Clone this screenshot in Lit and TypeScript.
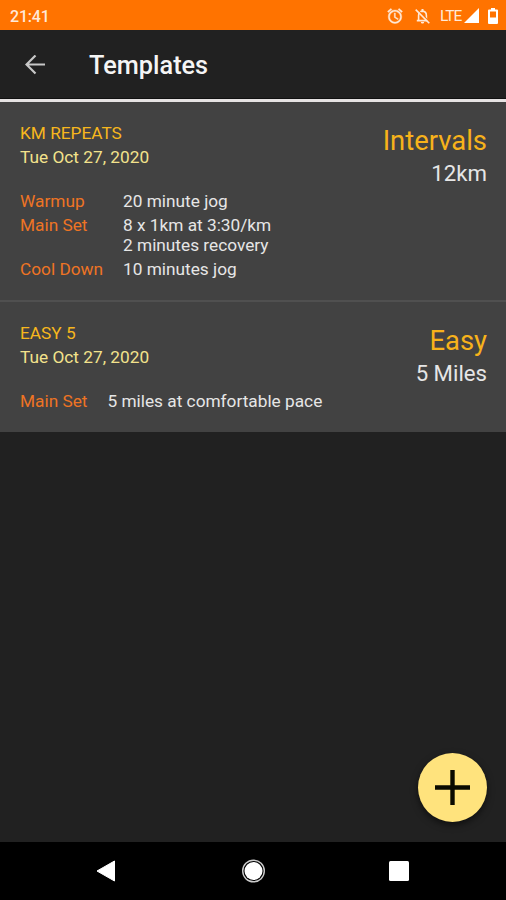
import { LitElement, html, css } from "lit";
import { customElement, property } from "lit/decorators.js";

interface Step {
  name: string;
  lines: string[];
}

interface Template {
  title: string;
  date: string;
  kind: string;
  distance: string;
  steps: Step[];
}

const TEMPLATES: Template[] = [
  {
    title: "KM REPEATS",
    date: "Tue Oct 27, 2020",
    kind: "Intervals",
    distance: "12km",
    steps: [
      { name: "Warmup", lines: ["20 minute jog"] },
      { name: "Main Set", lines: ["8 x 1km at 3:30/km", "2 minutes recovery"] },
      { name: "Cool Down", lines: ["10 minutes jog"] },
    ],
  },
  {
    title: "EASY 5",
    date: "Tue Oct 27, 2020",
    kind: "Easy",
    distance: "5 Miles",
    steps: [{ name: "Main Set", lines: ["5 miles at comfortable pace"] }],
  },
];

@customElement("status-bar")
export class StatusBar extends LitElement {
  static styles = css`
    :host {
      display: flex;
      align-items: center;
      height: 30px;
      box-sizing: border-box;
      padding: 1px 8px 0 10px;
      background: #ff7300;
      color: #ffe9d8;
      flex: none;
    }
    svg { display: block; flex: none; }
    .time { flex: 1; font-size: 16px; font-weight: 500; line-height: 20px; padding-top: 2px; letter-spacing: -0.2px; }
    .bell { margin-left: 11px; }
    .lte { width: 21px; margin: 0 3px 0 10px; font-size: 15.5px; line-height: 20px; letter-spacing: -1px; white-space: nowrap; }
    .battery { margin-left: 9px; }
  `;

  render() {
    return html`
      <span class="time">21:41</span>
      <svg width="18" height="18" viewBox="0 0 24 24" fill="currentColor">
        <path d="M22 5.72l-4.6-3.86-1.29 1.53 4.6 3.86L22 5.72zM7.88 3.39L6.6 1.86 2 5.71l1.29 1.53 4.59-3.85zM12.5 8H11v6l4.75 2.85.75-1.23-4-2.37V8zM12 4c-4.97 0-9 4.03-9 9s4.02 9 9 9c4.97 0 9-4.03 9-9s-4.03-9-9-9zm0 16c-3.87 0-7-3.13-7-7s3.13-7 7-7 7 3.13 7 7-3.13 7-7 7z" stroke="currentColor" stroke-width=".5" />
      </svg>
      <svg class="bell" width="15" height="16" viewBox="0 0 15 16">
        <path d="M3.6 12V7.4c0-2.3 1.4-4 3.9-4.3 2.5.3 3.9 2 3.9 4.3V12M1.8 12.6h11.4" fill="none" stroke="currentColor" stroke-width="1.6" />
        <path d="M6.5 1h2v2.2h-2zM5.9 13.9h3.2c0 2-3.2 2-3.2 0z" fill="currentColor" />
        <path d="M2 1.2 15.2 14.6" stroke="#ff7300" stroke-width="1.2" />
        <path d="M.7 1.6 14.3 15.2" stroke="currentColor" stroke-width="1.6" />
      </svg>
      <span class="lte">LTE</span>
      <svg width="15" height="15" viewBox="0 0 15 15"><path d="M15 0v15H0z" fill="#fff" /></svg>
      <svg class="battery" width="10" height="16" viewBox="0 0 10 16">
        <path d="M3 0h4v1.6h2a1 1 0 0 1 1 1V15a1 1 0 0 1-1 1H1a1 1 0 0 1-1-1V2.6a1 1 0 0 1 1-1h2zM2 3.6v6h6v-6z" fill="#fff" fill-rule="evenodd" />
      </svg>
    `;
  }
}

@customElement("template-card")
export class TemplateCard extends LitElement {
  @property({ attribute: false }) template!: Template;

  static styles = css`
    :host {
      display: block;
      padding: 21px 19px 21px 20px;
      background: #424242;
      font-size: 17.25px;
      line-height: 20px;
      color: #e6e6e6;
    }
    .head { display: flex; justify-content: space-between; height: 68px; }
    .title { color: #f7b71d; line-height: 24px; margin-top: -2px; }
    .date { color: #f3e28c; line-height: 24px; }
    .summary { text-align: right; }
    .kind { color: #f7b21b; font-size: 27.4px; line-height: 34px; margin-top: 1px; }
    .distance { font-size: 22.2px; line-height: 30px; }
    .steps { display: grid; grid-template-columns: max-content 1fr; column-gap: 20px; row-gap: 4px; }
    .name { color: #ee7424; }
  `;

  render() {
    const t = this.template;
    return html`
      <div class="head">
        <div>
          <div class="title">${t.title}</div>
          <div class="date">${t.date}</div>
        </div>
        <div class="summary">
          <div class="kind">${t.kind}</div>
          <div class="distance">${t.distance}</div>
        </div>
      </div>
      <div class="steps">
        ${t.steps.map(
          (s) => html`
            <div class="name">${s.name}</div>
            <div>${s.lines.map((line) => html`<div>${line}</div>`)}</div>
          `
        )}
      </div>
    `;
  }
}

@customElement("app-root")
export class AppRoot extends LitElement {
  static styles = css`
    :host {
      display: flex;
      flex-direction: column;
      position: relative;
      height: 900px;
      background: #212121;
      font-family: Roboto, "Liberation Sans", sans-serif;
      overflow: hidden;
    }
    svg { display: block; }
    .bar {
      display: flex;
      align-items: center;
      gap: 43px;
      height: 68px;
      box-sizing: border-box;
      padding: 2px 25px 0;
      flex: none;
    }
    .heading { margin: 2px 0 0; font-size: 25.3px; font-weight: 500; line-height: 32px; color: #f5f5f5; }
    .rule { height: 4px; background: #e6e3e3; border-top: 1px solid #111; box-sizing: border-box; flex: none; }
    .list { flex: 1; }
    template-card + template-card { border-top: 2px solid #505050; }
    .add {
      position: absolute;
      right: 19px;
      bottom: 78px;
      width: 69px;
      height: 69px;
      padding: 0;
      border: 0;
      border-radius: 50%;
      background: #ffe37d;
      display: grid;
      place-items: center;
      box-shadow: 0 3px 7px rgba(0, 0, 0, 0.55);
    }
    .nav {
      display: grid;
      grid-template-columns: 146px 146px 146px;
      justify-content: center;
      justify-items: center;
      align-items: center;
      height: 58px;
      background: #000;
      flex: none;
    }
  `;

  render() {
    return html`
      <status-bar></status-bar>
      <div class="bar">
        <svg width="21" height="20" viewBox="0 0 21 20" fill="none" stroke="#c8c8c8" stroke-width="2.2">
          <path d="M20 9.5H2M10.5 .5 1.5 9.5l9 9" />
        </svg>
        <h1 class="heading">Templates</h1>
      </div>
      <div class="rule"></div>
      <div class="list">
        ${TEMPLATES.map((t) => html`<template-card .template=${t}></template-card>`)}
      </div>
      <button class="add" aria-label="Add template">
        <svg width="35" height="35" viewBox="0 0 35 35">
          <path d="M17.5 0v35M0 17.5h35" stroke="#0a0a00" stroke-width="4.4" />
        </svg>
      </button>
      <div class="nav">
        <svg width="20" height="22" viewBox="0 0 20 22"><path d="M0 11 17.5 1v20z" fill="#fff" stroke="#fff" stroke-linejoin="round" /></svg>
        <svg width="24" height="24" viewBox="0 0 24 24">
          <circle cx="12.5" cy="12" r="10.8" fill="none" stroke="#ccc" stroke-width="1.4" />
          <circle cx="12.5" cy="12" r="9" fill="#fff" />
        </svg>
        <svg width="20" height="20" viewBox="0 0 20 20"><rect width="20" height="20" rx="1.5" fill="#fff" /></svg>
      </div>
    `;
  }
}
